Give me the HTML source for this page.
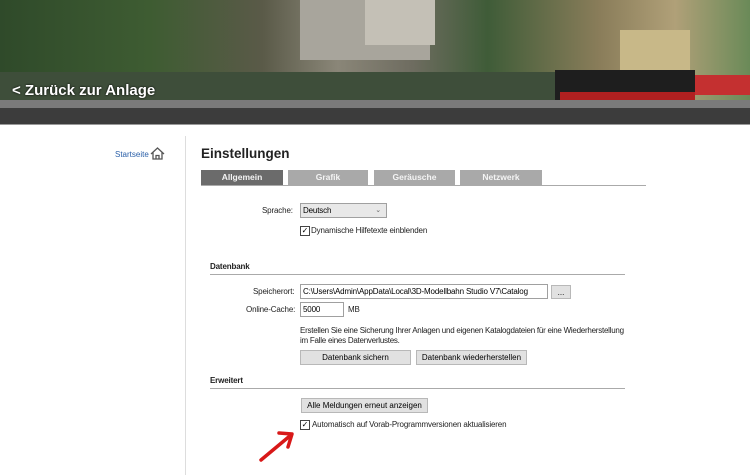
<!DOCTYPE html><html><head><style>
body{margin:0;width:750px;height:475px;background:#fff;font-family:"Liberation Sans",sans-serif;position:relative;overflow:hidden}
.a{position:absolute;white-space:nowrap}
.s{font-size:8px;color:#222;letter-spacing:-0.15px}
.b{font-weight:bold}
.tab{position:absolute;top:170px;height:15px;color:#f4f4f4;font-size:8.5px;font-weight:bold;text-align:center;line-height:15px;background:#a9a9a9}
.inp{position:absolute;border:1px solid #a0a0a0;background:#fff;height:13px;font-size:8px;line-height:13px;padding-left:2px;box-sizing:border-box;white-space:nowrap;overflow:hidden;letter-spacing:-0.15px}
.btn{position:absolute;border:1px solid #b8b8b8;background:#e1e1e1;font-size:8px;text-align:center;box-sizing:border-box;line-height:13px;height:15px;white-space:nowrap}
.cb{position:absolute;width:8px;height:8px;border:1px solid #444;background:#fff;font-size:8px;line-height:8px;text-align:center}
</style></head><body>
<div class="a" style="left:0;top:0;width:750px;height:108px;background:linear-gradient(90deg,#2f4a2a 0%,#3e5c32 20%,#5a5a48 35%,#8a8678 45%,#6e6c60 55%,#3f5c38 65%,#8a7d5a 80%,#b0a078 90%,#6a8a58 100%)"></div>
<div class="a" style="left:300px;top:0;width:130px;height:60px;background:#a8a59c"></div>
<div class="a" style="left:365px;top:0;width:70px;height:45px;background:#c4c0b6"></div>
<div class="a" style="left:620px;top:30px;width:70px;height:40px;background:#c8b888"></div>
<div class="a" style="left:0;top:72px;width:560px;height:28px;background:#3e4e3a"></div>
<div class="a" style="left:555px;top:70px;width:140px;height:30px;background:#1e1e1e"></div>
<div class="a" style="left:560px;top:92px;width:135px;height:8px;background:#b02020"></div>
<div class="a" style="left:695px;top:75px;width:55px;height:20px;background:#c43030"></div>
<div class="a" style="left:0;top:100px;width:750px;height:8px;background:#7a7a7a"></div>
<div class="a" style="left:0;top:108px;width:750px;height:16px;background:#3c3c3c"></div>
<div class="a" style="left:0;top:124px;width:750px;height:1px;background:#999"></div>
<div class="a" style="left:12px;top:82px;color:#fff;font-size:15px;font-weight:bold;text-shadow:0 0 2px #000">&lt; Zurück zur Anlage</div>
<div class="a" style="left:115px;top:150px;font-size:8px;color:#2a5fa8">Startseite</div>
<svg class="a" style="left:150px;top:147px" width="15" height="13" viewBox="0 0 15 13"><path d="M1 7L7.5 1L14 7M3 5.5V12H12V5.5M6 12V8.5H9V12" fill="none" stroke="#555" stroke-width="1.3"/></svg>
<div class="a" style="left:185px;top:136px;width:1px;height:339px;background:#ddd"></div>
<div class="a b" style="left:201px;top:146px;font-size:13.5px;color:#222">Einstellungen</div>
<div class="tab" style="left:201px;width:82px;background:#6b6b6b">Allgemein</div>
<div class="tab" style="left:288px;width:80px">Grafik</div>
<div class="tab" style="left:374px;width:81px">Geräusche</div>
<div class="tab" style="left:460px;width:82px">Netzwerk</div>
<div class="a" style="left:201px;top:185px;width:445px;height:1px;background:#aaa"></div>
<div class="a s" style="left:262px;top:206px">Sprache:</div>
<div class="inp" style="left:300px;top:203px;width:87px;height:15px;background:#e8e8e8;line-height:14px">Deutsch<span style="position:absolute;right:5px;color:#666;font-size:7px">&#8964;</span></div>
<div class="cb" style="left:300px;top:226px">✓</div>
<div class="a s" style="left:311px;top:226px">Dynamische Hilfetexte einblenden</div>
<div class="a s b" style="left:210px;top:262px">Datenbank</div>
<div class="a" style="left:210px;top:274px;width:415px;height:1px;background:#aaa"></div>
<div class="a s" style="left:253px;top:287px">Speicherort:</div>
<div class="inp" style="left:300px;top:284px;width:248px;height:15px">C:\Users\Admin\AppData\Local\3D-Modellbahn Studio V7\Catalog</div>
<div class="btn" style="left:551px;top:285px;width:20px;height:14px">...</div>
<div class="a s" style="left:246px;top:305px">Online-Cache:</div>
<div class="inp" style="left:300px;top:302px;width:44px;height:15px">5000</div>
<div class="a s" style="left:348px;top:305px">MB</div>
<div class="a s" style="left:300px;top:326px;line-height:10px;letter-spacing:-0.25px">Erstellen Sie eine Sicherung Ihrer Anlagen und eigenen Katalogdateien für eine Wiederherstellung<br>im Falle eines Datenverlustes.</div>
<div class="btn" style="left:300px;top:350px;width:111px">Datenbank sichern</div>
<div class="btn" style="left:416px;top:350px;width:111px">Datenbank wiederherstellen</div>
<div class="a s b" style="left:210px;top:376px">Erweitert</div>
<div class="a" style="left:210px;top:388px;width:415px;height:1px;background:#aaa"></div>
<div class="btn" style="left:301px;top:398px;width:127px">Alle Meldungen erneut anzeigen</div>
<div class="cb" style="left:300px;top:420px">✓</div>
<div class="a s" style="left:312px;top:420px">Automatisch auf Vorab-Programmversionen aktualisieren</div>
<svg class="a" style="left:255px;top:425px" width="45" height="40"><path d="M6 35L36 10M24 8L37 9L33 22" fill="none" stroke="#d81818" stroke-width="3.5" stroke-linecap="round" stroke-linejoin="round"/></svg>
</body></html>
